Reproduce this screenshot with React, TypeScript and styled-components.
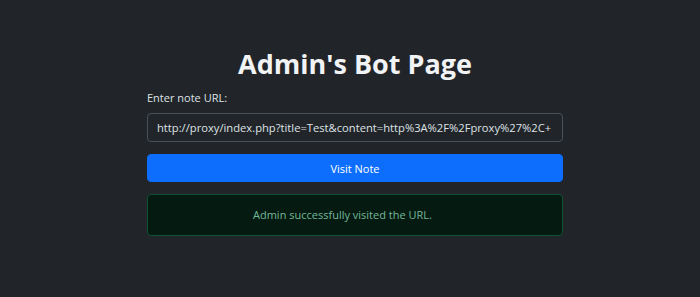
import React from "react";
import styled, { createGlobalStyle } from "styled-components";

const Global = createGlobalStyle`
  html, body { margin: 0; padding: 0; background: #212529; }
  body {
    font-family: "Open Sans", "Noto Sans", sans-serif;
    color: #dee2e6;
    font-size: 11px;
    line-height: 18px;
  }
  * { box-sizing: border-box; }
`;

const Page = styled.div`
  min-height: 297px;
  padding: 46px 0 0 10px;
  display: flex;
  justify-content: center;
`;

const Container = styled.main`
  width: 416px;
  display: flex;
  flex-direction: column;
`;

const Title = styled.h1`
  margin: 0 0 7px;
  text-align: center;
  font-size: 27px;
  font-weight: 700;
  line-height: 36px;
  color: #f1f3f5;
`;

const Label = styled.label`
  display: block;
  margin-bottom: 6px;
  font-size: 11px;
  line-height: 18px;
  color: #dee2e6;
`;

const Input = styled.input`
  display: block;
  width: 100%;
  height: 29px;
  padding: 4px 9px;
  margin-bottom: 12px;
  font-family: inherit;
  font-size: 11.2px;
  color: #dee2e6;
  background: #212529;
  border: 1px solid #495057;
  border-radius: 4px;
  outline: none;
`;

const Button = styled.button`
  display: block;
  width: 100%;
  height: 28px;
  margin-bottom: 12px;
  font-family: inherit;
  font-size: 11px;
  color: #ffffff;
  background: #0d6efd;
  border: 1px solid #0d6efd;
  border-radius: 4px;
`;

const Alert = styled.div<{ $indent: number }>`
  height: 42px;
  padding: 11px 12px 11px ${(p) => p.$indent}px;
  font-size: 11px;
  line-height: 18px;
  color: #75b798;
  background: #051b11;
  border: 1px solid #0f5132;
  border-radius: 4px;
`;

export default function App() {
  return (
    <>
      <Global />
      <Page>
        <Container>
          <Title>Admin's Bot Page</Title>
          <Label htmlFor="url">Enter note URL:</Label>
          <Input
            id="url"
            readOnly
            value="http://proxy/index.php?title=Test&content=http%3A%2F%2Fproxy%27%2C+"
          />
          <Button>Visit Note</Button>
          <Alert $indent={105}>Admin successfully visited the URL.</Alert>
        </Container>
      </Page>
    </>
  );
}
